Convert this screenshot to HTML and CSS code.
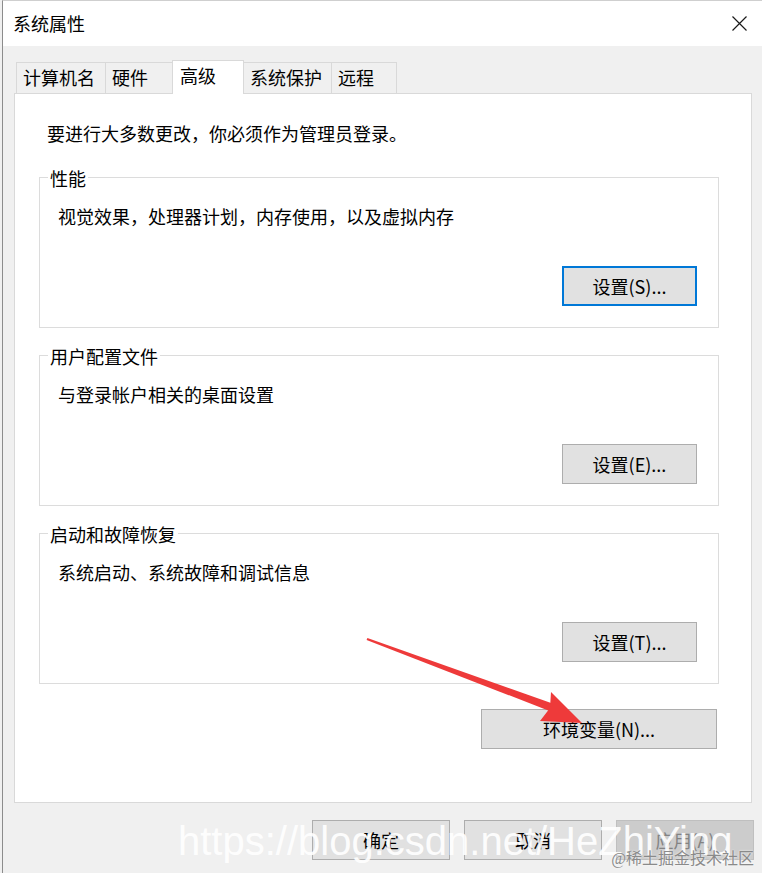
FILE: index.html
```html
<!DOCTYPE html>
<html lang="zh-CN">
<head>
<meta charset="utf-8">
<title>系统属性</title>
<link rel="stylesheet" href="styles.css">
</head>
<body>
<div class="window">
  <div class="titlebar">
    <span class="title">系统属性</span>
    <svg class="close" width="15" height="15" viewBox="0 0 15 15"><path d="M0.5 0.5 L14.5 14.5 M14.5 0.5 L0.5 14.5" stroke="#1a1a1a" stroke-width="1.2" fill="none"/></svg>
  </div>
  <div class="content">
    <div class="tabs">
      <div class="tab t1">计算机名</div>
      <div class="tab t2">硬件</div>
      <div class="tab t3 active">高级</div>
      <div class="tab t4">系统保护</div>
      <div class="tab t5">远程</div>
    </div>
    <div class="panel">
      <p class="intro">要进行大多数更改，你必须作为管理员登录。</p>
      <div class="group">
        <div class="legend">性能</div>
        <p class="desc">视觉效果，处理器计划，内存使用，以及虚拟内存</p>
        <button class="btn default">设置(S)...</button>
      </div>
      <div class="group">
        <div class="legend">用户配置文件</div>
        <p class="desc">与登录帐户相关的桌面设置</p>
        <button class="btn">设置(E)...</button>
      </div>
      <div class="group">
        <div class="legend">启动和故障恢复</div>
        <p class="desc">系统启动、系统故障和调试信息</p>
        <button class="btn">设置(T)...</button>
      </div>
      <button class="btn env">环境变量(N)...</button>
    </div>
    <div class="actions">
      <button class="btn action">确定</button>
      <button class="btn action">取消</button>
      <button class="btn action disabled">应用(A)</button>
    </div>
  </div>
  <svg class="arrow" width="762" height="873" viewBox="0 0 762 873">
    <polygon points="366.6,639.9 367.4,638.1 552.5,703.5 549.5,711" fill="#ee3a3a"/>
    <polygon points="582,723 551,692 550,708 540,721" fill="#ee3a3a"/>
  </svg>
  <div class="watermark">https://blog.csdn.net/HeZhiYing</div>
  <div class="credit">@稀土掘金技术社区</div>
</div>
</body>
</html>
```

FILE: styles.css
```css
* {
  box-sizing: border-box;
}

html, body {
  margin: 0;
  padding: 0;
  background: #f0f0f0;
}

body {
  width: 762px;
  height: 873px;
  overflow: hidden;
  font-family: "Noto Sans CJK SC", "Noto Sans", sans-serif;
  font-size: 18px;
  color: #000;
}

.window {
  position: relative;
  margin-left: 2px;
  height: 873px;
  border-left: 1px solid #8c8c8c;
  border-top: 1px solid #cfcfcf;
  background: #f0f0f0;
}

.titlebar {
  height: 45px;
  background: #fff;
  display: flex;
  align-items: center;
  justify-content: space-between;
  padding: 0 15px 0 10px;
}

.title {
  font-size: 18px;
  line-height: 24px;
  margin-top: -2px;
}

.close {
  display: block;
  margin-top: -1px;
}

.content {
  padding: 14px 0 0 11px;
}

.tabs {
  display: flex;
  align-items: flex-end;
  margin-left: 2px;
  height: 33px;
}

.tab {
  height: 31px;
  border: 1px solid #d9d9d9;
  border-bottom: none;
  background: #f0f0f0;
  padding-left: 6px;
  line-height: 29px;
  white-space: nowrap;
  margin-left: -1px;
}

.t1 { width: 90px; margin-left: 0; }
.t2 { width: 68px; }
.t3 { width: 72px; }
.t4 { width: 89px; }
.t5 { width: 66px; }

.tab.active {
  position: relative;
  z-index: 1;
  height: 34px;
  margin-bottom: -1px;
  background: #fff;
  padding-left: 7px;
  line-height: 28px;
}

.panel {
  width: 738px;
  background: #fff;
  border: 1px solid #d9d9d9;
  padding: 27px 0 53px 0;
}

.intro {
  margin: 0 0 0 32px;
  line-height: 24px;
}

.group {
  height: 151px;
  margin: 32px 32px 0 24px;
  border: 1px solid #dcdcdc;
  padding: 0 0 21px 18px;
  display: flex;
  flex-direction: column;
}

.group + .group {
  margin-top: 27px;
}

.legend {
  align-self: flex-start;
  margin: -12px 0 0 -10px;
  padding: 0 2px;
  background: #fff;
  line-height: 24px;
}

.desc {
  margin: 14px 0 0 0;
  line-height: 24px;
}

.btn {
  font-family: "Noto Sans CJK SC", "Noto Sans", sans-serif;
  font-size: 18px;
  color: #000;
  background: #e1e1e1;
  border: 1px solid #adadad;
  height: 40px;
  padding: 0;
  line-height: 24px;
  display: flex;
  align-items: center;
  justify-content: center;
}

.group .btn {
  width: 135px;
  align-self: flex-end;
  margin-top: auto;
  margin-right: 21px;
}

.btn.default {
  border: 2px solid #0078d7;
}

.btn.env {
  width: 236px;
  margin: 25px 34px 0 auto;
}

.actions {
  display: flex;
  justify-content: flex-end;
  gap: 14px;
  margin-top: 17px;
  padding-right: 8px;
}

.btn.action {
  width: 138px;
}

.btn.disabled {
  background: #cccccc;
  border-color: #bfbfbf;
  color: #838383;
}

.arrow {
  position: absolute;
  left: -3px;
  top: -1px;
  pointer-events: none;
}

.watermark {
  position: absolute;
  left: 175px;
  top: 820px;
  font-family: "Liberation Sans", Arial, sans-serif;
  font-size: 40px;
  line-height: 40px;
  color: rgba(255, 255, 255, 0.92);
  white-space: nowrap;
  pointer-events: none;
}

.credit {
  position: absolute;
  right: 8px;
  top: 847px;
  font-family: "Liberation Serif", "Noto Sans CJK SC", serif;
  font-size: 16px;
  line-height: 22px;
  color: #8a8a8a;
  white-space: nowrap;
  text-shadow: 0 0 2px #fff;
}
```
